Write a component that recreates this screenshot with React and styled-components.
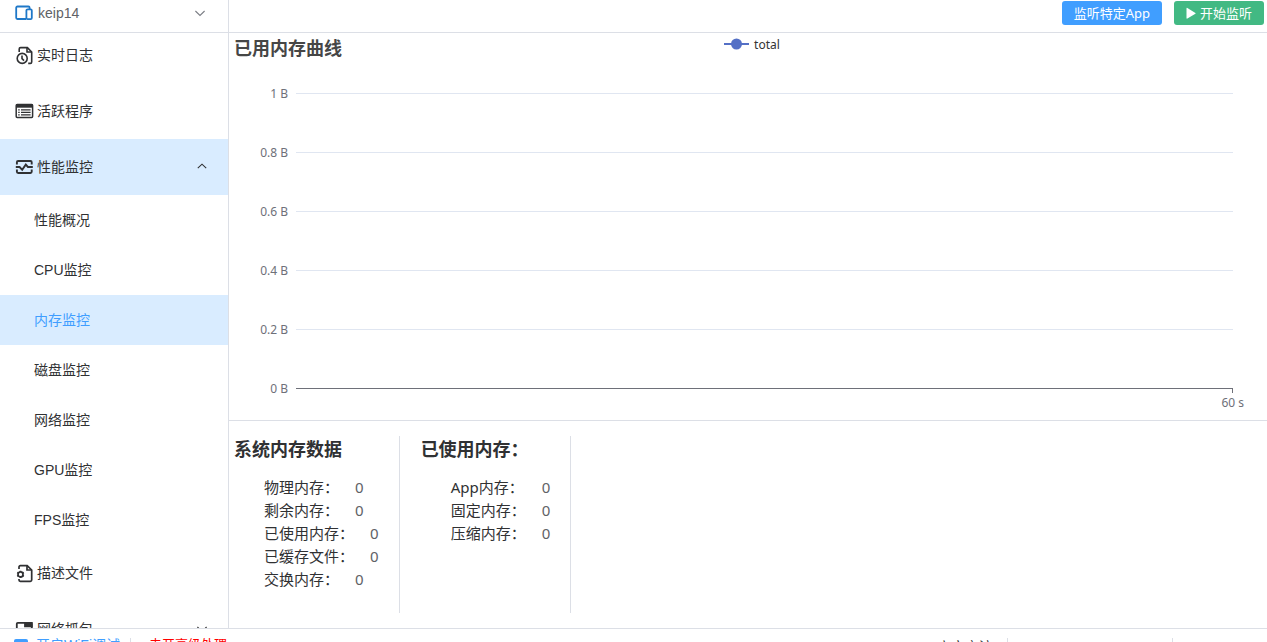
import React, { useState } from "react";
import styled, { createGlobalStyle } from "styled-components";

const GlobalStyle = createGlobalStyle`
  * {
    box-sizing: border-box;
  }
  body {
    margin: 0;
    overflow: hidden;
    background: #fff;
    color: #303133;
    font-family: "Liberation Sans", "Noto Sans CJK SC", sans-serif;
    font-size: 14px;
  }
  button {
    font-family: inherit;
    cursor: pointer;
  }
  h2 {
    margin: 0;
  }
`;

const Shell = styled.div`
  height: calc(100vh + 19px);
  display: flex;
  flex-direction: column;
`;

const Header = styled.header`
  height: 33px;
  flex-shrink: 0;
  display: flex;
  border-bottom: 1px solid #dcdfe6;
`;

const DeviceSelect = styled.button`
  width: 229px;
  display: flex;
  align-items: center;
  gap: 5px;
  padding: 0 23px 6px 15px;
  border: none;
  border-right: 1px solid #dcdfe6;
  background: #fff;
  color: #606266;
  font-size: 14px;
  text-align: left;
`;

const DeviceName = styled.span`
  flex: 1;
`;

const Actions = styled.div`
  flex: 1;
  display: flex;
  justify-content: flex-end;
  align-items: flex-start;
  gap: 12px;
  padding: 1px 3px 0 0;
`;

const ActionButton = styled.button`
  height: 24px;
  display: flex;
  align-items: center;
  gap: 4px;
  padding: 0 12px 1px;
  border: none;
  border-radius: 3px;
  background: ${({ $color }) => $color};
  color: #fff;
  && {
    font-family: "Noto Sans", "Noto Sans CJK SC", sans-serif;
  }
  font-size: 13px;
  line-height: 22px;
`;

const Body = styled.div`
  flex: 1;
  min-height: 0;
  display: flex;
`;

const Sidebar = styled.nav`
  width: 229px;
  flex-shrink: 0;
  overflow: hidden;
  border-right: 1px solid #dcdfe6;
`;

const Menu = styled.div`
  display: flex;
  flex-direction: column;
  margin-top: -6px;
`;

const MenuItem = styled.a`
  height: 56px;
  display: flex;
  align-items: center;
  gap: 3px;
  padding: 0 21px 0 15px;
  background: ${({ $active }) => ($active ? "#d9ecff" : "transparent")};
  color: #303133;
  text-decoration: none;
`;

const MenuLabel = styled.span`
  flex: 1;
  padding-bottom: 2px;
`;

const SubItem = styled.a`
  height: 50px;
  display: flex;
  align-items: center;
  padding: 0 0 2px 34px;
  background: ${({ $active }) => ($active ? "#d9ecff" : "transparent")};
  color: ${({ $active }) => ($active ? "#409eff" : "#303133")};
  text-decoration: none;
`;

const Content = styled.main`
  flex: 1;
  min-width: 0;
  display: flex;
  flex-direction: column;
  font-family: "Noto Sans", "Noto Sans CJK SC", sans-serif;
`;

const ChartPanel = styled.section`
  padding-bottom: 10px;
  border-bottom: 1px solid #dcdfe6;
`;

const ChartHead = styled.div`
  display: grid;
  grid-template-columns: 1fr auto 1fr;
  align-items: start;
  padding-left: 5px;
  margin-bottom: 23px;
`;

const ChartTitle = styled.h2`
  color: #464646;
  font-size: 18px;
  line-height: 30px;
`;

const Legend = styled.div`
  display: flex;
  align-items: center;
  gap: 5px;
  height: 22px;
  padding-left: 3px;
  color: #333;
  font-size: 12px;
`;

const Plot = styled.div`
  display: flex;
  flex-direction: column;
  gap: 44px;
  padding-right: 34px;
`;

const PlotRow = styled.div`
  height: 15px;
  display: flex;
  align-items: center;
  gap: 8px;
  color: #6e7079;
  font-size: 12px;
  line-height: 15px;
`;

const PlotLabel = styled.span`
  width: 59px;
  text-align: right;
`;

const GridLine = styled.div`
  position: relative;
  flex: 1;
  height: 1px;
  background: ${({ $axis }) => ($axis ? "#6e7079" : "#e0e6f1")};
  &::after {
    content: "";
    display: ${({ $axis }) => ($axis ? "block" : "none")};
    position: absolute;
    right: 0;
    top: 0;
    width: 1px;
    height: 5px;
    background: #6e7079;
  }
`;

const TimeLabel = styled.div`
  padding-right: 23px;
  color: #6e7079;
  font-size: 12px;
  line-height: 14px;
  text-align: right;
`;

const Stats = styled.section`
  flex: 1;
  display: flex;
  padding: 15px 0;
`;

const StatColumn = styled.div`
  padding: 0 20px 0 ${({ $first }) => ($first ? "5px" : "21px")};
  border-right: 1px solid #dcdfe6;
`;

const StatTitle = styled.h2`
  margin-bottom: 14px;
  font-size: 18px;
  line-height: 26px;
`;

const StatList = styled.dl`
  margin: 0;
  padding-left: 30px;
`;

const StatRow = styled.div`
  display: flex;
  gap: 16px;
  font-size: 15px;
  line-height: 23px;
  dt {
    min-width: 75px;
  }
  dd {
    margin: 0;
    color: #606266;
  }
`;

const Footer = styled.footer`
  height: 33px;
  flex-shrink: 0;
  display: flex;
  align-items: center;
  padding-left: 14px;
  border-top: 1px solid #dcdfe6;
  font-size: 14px;
  line-height: 16px;
`;

const FooterLink = styled.a`
  display: flex;
  align-items: center;
  gap: 8px;
  padding-right: 10px;
  color: #409eff;
  text-decoration: none;
`;

const FooterWarning = styled.span`
  flex: 1;
  padding-left: 18px;
  color: #f00;
  font-size: 13px;
`;

const FooterText = styled.span`
  padding: 4px 14px 0 0;
`;

const FooterDivider = styled.span`
  width: 1px;
  height: 14px;
  background: #dcdfe6;
`;

const FooterSlot = styled.span`
  width: ${({ $width }) => $width}px;
`;

const DeviceIcon = () => (
  <svg width="18" height="16" viewBox="0 0 18 16" fill="none" stroke="#1f78c8" strokeWidth="1.8">
    <path d="M11 14H2.4A1.2 1.2 0 0 1 1.2 12.8V2.7a1.2 1.2 0 0 1 1.2-1.2h11a1.2 1.2 0 0 1 1.2 1.2v1.8" />
    <rect x="11.4" y="4.4" width="5.4" height="9.8" rx="1.2" />
  </svg>
);

const LogIcon = () => (
  <svg width="19" height="19" viewBox="0 0 19 19" fill="none" stroke="#303133" strokeWidth="1.6">
    <path d="M4.2 6V3a1.4 1.4 0 0 1 1.4-1.4h6.8L16.7 6v10a1.4 1.4 0 0 1-1.4 1.4h-2.1" />
    <path d="M12 1.8V6h4.5" />
    <circle cx="7.2" cy="12.4" r="5" />
    <path d="M7 9.6v3l2 2" />
  </svg>
);

const ProgramIcon = () => (
  <svg width="19" height="16" viewBox="0 0 19 16" fill="none" stroke="#303133">
    <rect x="1.2" y="1.6" width="16.4" height="12.8" rx="1" strokeWidth="1.5" />
    <path d="M1 3h17" strokeWidth="3.4" />
    <path d="M3.2 6.8h1.5M6 6.8h9.6M3.2 9.3h1.5M6 9.3h9.6M3.2 11.8h1.5M6 11.8h9.6" strokeWidth="1.3" />
  </svg>
);

const MonitorIcon = () => (
  <svg width="19" height="16" viewBox="0 0 19 16" fill="none" stroke="#303133" strokeWidth="1.9">
    <path d="M1.9 5.4V3.2a1.2 1.2 0 0 1 1.2-1.2h12.4a1.2 1.2 0 0 1 1.2 1.2v2.2M1.9 10.6v2.2a1.2 1.2 0 0 0 1.2 1.2h12.4a1.2 1.2 0 0 0 1.2-1.2v-2.2" />
    <path d="M.8 8h3.8l2.6 2.8 3.6-5.2L12.9 8h4.9" />
  </svg>
);

const ProfileIcon = () => (
  <svg width="19" height="19" viewBox="0 0 19 19" fill="none" stroke="#303133" strokeWidth="1.7">
    <path d="M4 5V3a1.3 1.3 0 0 1 1.3-1.3h6.9L16.7 6v10a1.3 1.3 0 0 1-1.3 1.3H5.3A1.3 1.3 0 0 1 4 16v-1" />
    <path d="M12 1.8V6h4.5" />
    <circle cx="5.5" cy="10.4" r="2.5" />
    <path d="M5.5 6.8v1M5.5 13v1M2.2 8.5l1 .6M8.8 8.5l-1 .6M2.2 12.3l1-.6M8.8 12.3l-1-.6" />
  </svg>
);

const CaptureIcon = () => (
  <svg width="19" height="16" viewBox="0 0 19 16" fill="none" stroke="#303133" strokeWidth="1.8">
    <rect x="1.8" y="1.8" width="15" height="12" rx="1" />
    <path d="M10 1.8h6.8v3.6H10z" fill="#303133" />
  </svg>
);

const UsbIcon = () => (
  <svg width="14" height="14" viewBox="0 0 14 14">
    <rect y="1" width="14" height="13" rx="2" fill="#409eff" />
  </svg>
);

const PlayIcon = () => (
  <svg width="10" height="12" viewBox="0 0 10 12">
    <path d="M.5 1.4a.6.6 0 0 1 .9-.5l8 5a.5.5 0 0 1 0 .9l-8 4.7a.6.6 0 0 1-.9-.5z" fill="#fff" />
  </svg>
);

const Arrow = ({ up, color = "#303133" }) => (
  <svg width="10" height="8" viewBox="0 0 10 8" fill="none" stroke={color} strokeWidth="1.1">
    <path d={up ? "M.8 5.2 5 1.2l4.2 4" : "M.4 2 5 6.4 9.6 2"} />
  </svg>
);

const LegendMark = () => (
  <svg width="25" height="14" viewBox="0 0 25 14">
    <path d="M0 7h25" stroke="#5470c6" strokeWidth="2" />
    <circle cx="12.5" cy="7" r="5.5" fill="#5470c6" />
  </svg>
);

const monitorItems = ["性能概况", "CPU监控", "内存监控", "磁盘监控", "网络监控", "GPU监控", "FPS监控"];

const axisLabels = ["1 B", "0.8 B", "0.6 B", "0.4 B", "0.2 B", "0 B"];

const systemMemory = [
  { label: "物理内存", value: 0 },
  { label: "剩余内存", value: 0 },
  { label: "已使用内存", value: 0 },
  { label: "已缓存文件", value: 0 },
  { label: "交换内存", value: 0 },
];

const usedMemory = [
  { label: "App内存", value: 0 },
  { label: "固定内存", value: 0 },
  { label: "压缩内存", value: 0 },
];

const StatBlock = ({ title, items, first }) => (
  <StatColumn $first={first}>
    <StatTitle>{title}</StatTitle>
    <StatList>
      {items.map((item) => (
        <StatRow key={item.label}>
          <dt>{item.label}：</dt>
          <dd>{item.value}</dd>
        </StatRow>
      ))}
    </StatList>
  </StatColumn>
);

const App = () => {
  const [current, setCurrent] = useState("内存监控");
  const [open, setOpen] = useState(true);

  return (
    <Shell>
      <GlobalStyle />
      <Header>
        <DeviceSelect type="button" aria-haspopup="listbox">
          <DeviceIcon />
          <DeviceName>keip14</DeviceName>
          <Arrow color="#7b7e85" />
        </DeviceSelect>
        <Actions>
          <ActionButton type="button" $color="#409eff">监听特定App</ActionButton>
          <ActionButton type="button" $color="#42b983">
            <PlayIcon />
            开始监听
          </ActionButton>
        </Actions>
      </Header>
      <Body>
        <Sidebar>
          <Menu>
            <MenuItem href="#log">
              <LogIcon />
              <MenuLabel>实时日志</MenuLabel>
            </MenuItem>
            <MenuItem href="#program">
              <ProgramIcon />
              <MenuLabel>活跃程序</MenuLabel>
            </MenuItem>
            <MenuItem href="#monitor" $active onClick={() => setOpen(!open)}>
              <MonitorIcon />
              <MenuLabel>性能监控</MenuLabel>
              <Arrow up={open} />
            </MenuItem>
            {open &&
              monitorItems.map((name) => (
                <SubItem
                  key={name}
                  href="#monitor"
                  $active={name === current}
                  onClick={() => setCurrent(name)}
                >
                  {name}
                </SubItem>
              ))}
            <MenuItem href="#profile">
              <ProfileIcon />
              <MenuLabel>描述文件</MenuLabel>
            </MenuItem>
            <MenuItem href="#capture">
              <CaptureIcon />
              <MenuLabel>网络抓包</MenuLabel>
              <Arrow />
            </MenuItem>
          </Menu>
        </Sidebar>
        <Content>
          <ChartPanel>
            <ChartHead>
              <ChartTitle>已用内存曲线</ChartTitle>
              <Legend>
                <LegendMark />
                total
              </Legend>
            </ChartHead>
            <Plot>
              {axisLabels.map((label, idx) => (
                <PlotRow key={label}>
                  <PlotLabel>{label}</PlotLabel>
                  <GridLine $axis={idx === axisLabels.length - 1} />
                </PlotRow>
              ))}
            </Plot>
            <TimeLabel>60 s</TimeLabel>
          </ChartPanel>
          <Stats>
            <StatBlock title="系统内存数据" items={systemMemory} first />
            <StatBlock title="已使用内存：" items={usedMemory} />
          </Stats>
        </Content>
      </Body>
      <Footer>
        <FooterLink href="#wifi">
          <UsbIcon />
          开启WiFi调试
        </FooterLink>
        <FooterDivider />
        <FooterWarning>未开高级处理</FooterWarning>
        <FooterText>官方交流</FooterText>
        <FooterDivider />
        <FooterSlot $width={164} />
        <FooterDivider />
        <FooterSlot $width={94} />
      </Footer>
    </Shell>
  );
};

export default App;
